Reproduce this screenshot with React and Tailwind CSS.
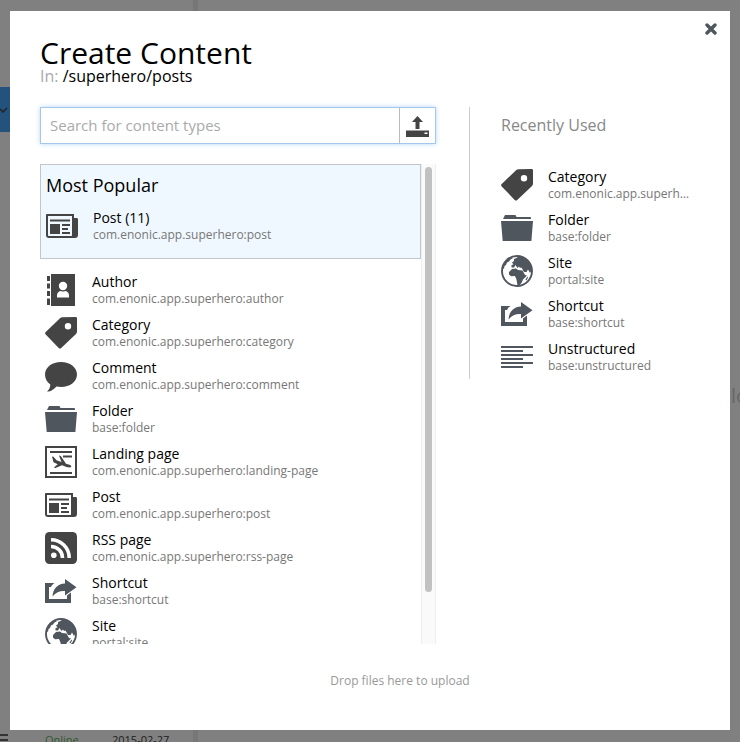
import { useState } from "react";

const INK = "#444444";
const SLATE = "#50565e";

function PostIcon() {
  return (
    <svg viewBox="0 0 32 32" className="size-8 shrink-0" aria-hidden="true">
      <path fill={INK} fillRule="evenodd" d="M1 4h27v4h2.500c1 0 1.500.6 1.500 1.500V25c0 2-1 3-3 3H3c-2 0-3-1-3-3V5c0-.6.400-1 1-1zm1 2v19c0 .7.300 1 1 1h22.500c.4 0 .5-.3.500-1V6z" />
      <path fill={INK} d="M4 9.500h20v2H4zM4 14h10v10H4zM16 14h8v2h-8zM16 18h6v2h-6zM16 22h8v2h-8z" />
    </svg>
  );
}

function AuthorIcon() {
  return (
    <svg viewBox="0 0 32 32" className="size-8 shrink-0" aria-hidden="true">
      <path fill={INK} d="M6 0h24v32H6zM2 2h3v5H2zM2 9.500h3v5H2zM2 17h3v5H2zM2 24.500h3V31H2z" />
      <circle cx="18" cy="12" r="4.200" fill="#fff" />
      <path fill="#fff" d="M12 23.500v-2c0-3 2-4.500 4-4.500 1.300.8 2.700.8 4 0 2 0 4 1.500 4 4.500v2z" />
    </svg>
  );
}

function CategoryIcon() {
  return (
    <svg viewBox="0 0 32 32" className="size-8 shrink-0" aria-hidden="true">
      <path fill={INK} fillRule="evenodd" d="M17.500.3 30.500 0c1 0 1.500.5 1.500 1.500v13c0 1-.3 1.800-1 2.500L16.200 31c-.8.8-1.700.8-2.500 0L.7 17.500c-.8-.8-.8-1.700 0-2.400L15 1.300c.8-.7 1.500-1 2.500-1zM23 6a3.200 3.200 0 1 0 0 6.400A3.200 3.200 0 0 0 23 6z" />
    </svg>
  );
}

function CommentIcon() {
  return (
    <svg viewBox="0 0 32 32" className="size-8 shrink-0" aria-hidden="true">
      <path fill={INK} d="M16 2c9 0 16 5.300 16 12.500S25 27 16 27c-1.500 0-3-.2-4.500-.5C8.500 29.500 5.500 32 2 31.500c2.200-1.800 3.300-4 3.300-7C2 22.200 0 18.500 0 14.500 0 7.300 7 2 16 2z" />
    </svg>
  );
}

function FolderIcon() {
  return (
    <svg viewBox="0 0 32 32" className="size-8 shrink-0" aria-hidden="true">
      <path fill={SLATE} d="M2 7 4 3h10.500l1 2H29c.8 0 1 .5 1 2zM0 9h32l-1.600 20H1.700z" />
    </svg>
  );
}

function LandingIcon() {
  return (
    <svg viewBox="0 0 32 32" className="size-8 shrink-0" aria-hidden="true">
      <path fill={INK} fillRule="evenodd" d="M0 0h32v32H0zm2 2v28h28V2z" />
      <path fill={INK} d="M5 5h22v2H5zM18 9.500h9v2h-9zM5 26h22v2H5z" />
      <path fill={INK} d="m7 10.500 1.500.2 3 3.500 5 1.800L14 9.500l1.800.5 5.200 7.700 3.500 1.100c1.500.6 2 1.500 1.700 2.300-1.200.6-3 .5-4.700-.1l-4.500-1.700L10.500 22l-1.600-.5 3.800-3.300-4.200-2z" />
    </svg>
  );
}

function RssIcon() {
  return (
    <svg viewBox="0 0 32 32" className="size-8 shrink-0" aria-hidden="true">
      <rect width="32" height="32" rx="4.500" fill={INK} />
      <circle cx="8.800" cy="23.200" r="2.800" fill="#fff" />
      <path d="M6 14.500c6.500 0 11.500 5 11.500 11.500M6 7.800c10 0 18.200 8 18.200 18.200" fill="none" stroke="#fff" strokeWidth="3.600" />
    </svg>
  );
}

function ShortcutIcon() {
  return (
    <svg viewBox="0 0 32 32" className="size-8 shrink-0" aria-hidden="true">
      <path fill={SLATE} d="M0 8h9.500c-1.500 1-2.700 2.300-3.500 4H4v12h18v-3.500l4-3V28H0z" />
      <path fill={SLATE} d="M20 4l11.500 8.300L20 20.500V16c-5-.3-9 1.200-12.500 5.500C8 13.500 12.500 9 20 8.500z" />
    </svg>
  );
}

function SiteIcon() {
  return (
    <svg viewBox="0 0 32 32" className="size-8 shrink-0" aria-hidden="true">
      <circle cx="16" cy="16" r="15" fill="none" stroke={SLATE} strokeWidth="1.900" />
      <path fill={SLATE} d="M18 1c6 .7 10.500 4.500 12 9l.8 5-1.800 3-2-3.500-1.500 2.500-2.500 0-2.500-4.500-1.500.5-1-1.500-1.500 1.500-2-3-1.500 2.500-2.500 0 0-2.500 2-.5-1.500-2 2-1.500 0-2 2.500-1z" />
      <path fill={SLATE} d="M8 17l3-3 4-.5 2 1.500 4.500.5 2.500 4.500 2 .5-4 4-1.500 3.500-2.500 2.500h-1.500l-1-6-1.500-3.500-4 .3L8 19.500z" />
      <path fill={SLATE} d="M1.500 13C2.500 8 5.500 4.500 10 2.500l2 .5-2.500 1.500-1.500 2-2 1L5 10l-1.500 1L3 14zM24.500 24.500l2-3 .5 1-1.500 3z" />
    </svg>
  );
}

function UnstructuredIcon() {
  return (
    <svg viewBox="0 0 32 32" className="size-8 shrink-0" aria-hidden="true">
      <path fill={SLATE} d="M0 5h32v2H0zM0 9h22v2H0zM0 13h32v2H0zM0 17h22v2H0zM0 21h32v2H0zM0 25h22v2H0z" />
    </svg>
  );
}

const TYPES = [
  { name: "Author", id: "com.enonic.app.superhero:author", Icon: AuthorIcon },
  { name: "Category", id: "com.enonic.app.superhero:category", Icon: CategoryIcon },
  { name: "Comment", id: "com.enonic.app.superhero:comment", Icon: CommentIcon },
  { name: "Folder", id: "base:folder", Icon: FolderIcon },
  { name: "Landing page", id: "com.enonic.app.superhero:landing-page", Icon: LandingIcon },
  { name: "Post", id: "com.enonic.app.superhero:post", Icon: PostIcon },
  { name: "RSS page", id: "com.enonic.app.superhero:rss-page", Icon: RssIcon },
  { name: "Shortcut", id: "base:shortcut", Icon: ShortcutIcon },
  { name: "Site", id: "portal:site", Icon: SiteIcon },
];

const RECENT = [
  { name: "Category", id: "com.enonic.app.superhero:category", Icon: CategoryIcon },
  { name: "Folder", id: "base:folder", Icon: FolderIcon },
  { name: "Site", id: "portal:site", Icon: SiteIcon },
  { name: "Shortcut", id: "base:shortcut", Icon: ShortcutIcon },
  { name: "Unstructured", id: "base:unstructured", Icon: UnstructuredIcon },
];

function TypeRow({ name, id, Icon }) {
  return (
    <li>
      <button type="button" className="flex w-full items-center gap-[15px] text-left">
        <Icon />
        <span className="min-w-0 flex-1">
          <span className="block truncate text-sm leading-[18px] text-black">{name}</span>
          <span className="block truncate text-xs leading-4 text-[#777777]">{id}</span>
        </span>
      </button>
    </li>
  );
}

function Backdrop() {
  return (
    <div className="absolute inset-0 flex overflow-hidden bg-[#808080] text-[11px]" aria-hidden="true">
      <div className="flex w-[193px] shrink-0 flex-col justify-between pt-[87px]">
        <div className="flex h-[45px] items-center bg-[#23527c]">
          <svg viewBox="0 0 8 6" className="h-[6px] w-2">
            <path d="M0 2l3 3 4-4" fill="none" stroke="#222" strokeWidth="1.500" />
          </svg>
        </div>
        <div className="flex h-2 items-start">
          <svg viewBox="0 0 8 8" className="size-2 shrink-0">
            <path d="M0 0h8v2H0zM0 5h8v2H0z" fill="#333" />
          </svg>
          <span className="ml-[37px] w-[67px] leading-3 text-[#2f5a2b]">Online</span>
          <span className="leading-3 text-[#1c1c1c]">2015-02-27</span>
        </div>
      </div>
      <div className="w-[5px] shrink-0 bg-[#777777]" />
      <div className="flex flex-1 items-center justify-end overflow-hidden pt-[50px]">
        <span className="-mr-2 text-xl text-[#666666]">plo</span>
      </div>
    </div>
  );
}

export default function App() {
  const [query, setQuery] = useState("");
  return (
    <div className="relative h-screen font-['Open_Sans','Noto_Sans',sans-serif]">
      <Backdrop />
      <div className="relative h-full px-[10px] pt-[11px] pb-3">
        <main role="dialog" aria-labelledby="title" className="relative flex h-full flex-col bg-white px-[30px] pt-[26px]">
          <button type="button" aria-label="Close" className="absolute top-3 right-[13px]">
            <svg viewBox="0 0 12 12" className="size-3">
              <path d="M2 2l8 8M10 2l-8 8" stroke={SLATE} strokeWidth="3.400" strokeLinecap="round" />
            </svg>
          </button>
          <header>
            <h1 id="title" className="text-[30px] leading-8 text-black">Create Content</h1>
            <p className="text-base leading-[14px] text-black">
              <span className="text-[#aaaaaa]">In:</span> /superhero/posts
            </p>
          </header>
          <div className="mt-6 flex min-h-0 flex-1">
            <section className="flex w-[396px] shrink-0 flex-col">
              <div className="flex h-[37px] shrink-0 border border-[#a5c7ea] shadow-[0_0_5px_#b5d8f8]">
                <input
                  type="text"
                  aria-label="Search for content types"
                  placeholder="Search for content types"
                  value={query}
                  onChange={(e) => setQuery(e.target.value)}
                  className="min-w-0 flex-1 px-[9px] text-[15px] text-black outline-none placeholder:text-[#aaaaaa]"
                />
                <button type="button" aria-label="Upload" className="flex w-9 items-center justify-center border-l border-[#bbbbbb]">
                  <svg viewBox="0 0 24 24" className="size-6">
                    <path fill={INK} fillRule="evenodd" d="M11.500 2l5.500 6h-3.500v7h-4V8H6zM0 16.500h23V23H0zM18.500 18.500v1.500h3v-1.500z" />
                  </svg>
                </button>
              </div>
              <div className="mt-5 flex min-h-0 flex-1">
                <div className="min-w-0 flex-1 overflow-hidden">
                  <section className="border border-[#c0c6cc] bg-[#f0f8ff] px-[5px] pt-2 pb-[15px]">
                    <h2 className="text-lg leading-6 text-black">Most Popular</h2>
                    <ul className="mt-3">
                      <TypeRow name="Post (11)" id="com.enonic.app.superhero:post" Icon={PostIcon} />
                    </ul>
                  </section>
                  <ul className="mt-[14px] flex flex-col gap-[9px] px-[5px]">
                    {TYPES.map((t) => (
                      <TypeRow key={t.name} {...t} />
                    ))}
                  </ul>
                </div>
                <div className="w-[15px] shrink-0 border-x border-[#eeeeee] bg-[#fafafa] px-[3px] pt-[3px]">
                  <div className="h-[89%] rounded-full bg-[#c1c1c1]" />
                </div>
              </div>
            </section>
            <aside className="ml-[33px] min-w-0 flex-1 self-start border-l border-[#cccccc] pr-2 pb-[5px] pl-[31px]">
              <h2 className="pt-2 text-base leading-5 text-[#888888]">Recently Used</h2>
              <ul className="mt-[33px] flex flex-col gap-[9px]">
                {RECENT.map((t) => (
                  <TypeRow key={t.name} {...t} />
                ))}
              </ul>
            </aside>
          </div>
          <p className="flex h-[86px] shrink-0 items-center justify-center pb-3 pl-15 text-xs text-[#999999]">
            Drop files here to upload
          </p>
        </main>
      </div>
    </div>
  );
}
